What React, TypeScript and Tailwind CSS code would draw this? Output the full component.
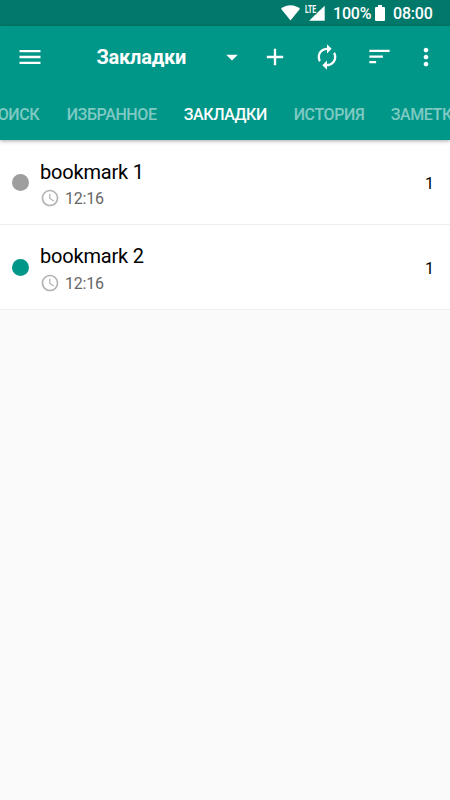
import { useState } from "react";
import {
    MdAccessTime,
    MdAdd,
    MdArrowDropDown,
    MdAutorenew,
    MdMenu,
    MdMoreVert,
    MdSort,
} from "react-icons/md";

const tabs = [
    { label: "ПОИСК", width: "w-[54px]" },
    { label: "ИЗБРАННОЕ", width: "w-[91px]" },
    { label: "ЗАКЛАДКИ", width: "w-[84px]" },
    { label: "ИСТОРИЯ", width: "w-[71px]" },
    { label: "ЗАМЕТКИ", width: "w-[76px]" },
];

const bookmarks = [
    { title: "bookmark 1", time: "12:16", count: 1, dot: "bg-[#9e9e9e]", offset: "pt-[6px]" },
    { title: "bookmark 2", time: "12:16", count: 1, dot: "bg-[#009688]", offset: "pt-[5px]" },
];

const StatusBar = () => (
    <div className="flex h-[26px] shrink-0 items-center bg-[#00796b] pl-[281px] text-base font-medium tracking-[-0.2px] text-white">
        <svg width="19" height="16" viewBox="0 0 19 16" fill="currentColor" className="shrink-0">
            <path d="M9.5 15.5 0 3.8C2.6 1.5 5.8.2 9.5.2S16.4 1.5 19 3.8Z" />
        </svg>
        <div className="relative ml-[4px] h-4 w-[21px] shrink-0">
            <svg width="21" height="16" viewBox="0 0 21 16" fill="currentColor">
                <path d="M20.7.7V15.8H5.2L11.5 9.5H12.500V8.500Z" />
            </svg>
            <span className="absolute left-[1px] top-0 origin-left scale-x-[0.62] text-[11px] font-bold leading-[9px] tracking-normal">LTE</span>
        </div>
        <span className="ml-2 w-[38px] whitespace-nowrap pt-[2px] leading-none">100%</span>
        <svg width="10" height="16" viewBox="0 0 10 16" fill="currentColor" className="ml-[4px] shrink-0">
            <path d="M3 0h4v2h2q1 0 1 1v12q0 1-1 1H1q-1 0-1-1V3q0-1 1-1h2z" />
        </svg>
        <span className="ml-[8px] whitespace-nowrap pt-[2px] leading-none">08:00</span>
    </div>
);

const App = () => {
    const [active, setActive] = useState("ЗАКЛАДКИ");

    return (
        <div className="flex h-[800px] w-[450px] flex-col overflow-hidden bg-[#fafafa] font-[Roboto,'Noto_Sans',sans-serif]">
            <StatusBar />

            <header className="z-10 h-[114px] shrink-0 bg-[#009688] text-white shadow-[0_1px_4px_rgba(0,0,0,0.35)]">
                <div className="flex h-[61px] items-center pl-[16.4px]">
                    <button aria-label="Меню"><MdMenu size={28} /></button>
                    <h1 className="ml-[52px] w-[90px] whitespace-nowrap text-[20px] font-bold leading-6 tracking-[-0.2px]">Закладки</h1>
                    <MdArrowDropDown size={28} className="ml-[31.6px]" />
                    <button aria-label="Добавить" className="ml-[15px]"><MdAdd size={28} /></button>
                    <button aria-label="Обновить" className="ml-[24px]"><MdAutorenew size={28} /></button>
                    <button aria-label="Сортировать" className="ml-[25px]"><MdSort size={27} /></button>
                    <button aria-label="Ещё" className="ml-[19px]"><MdMoreVert size={28} /></button>
                </div>

                <nav className="flex h-[53px] overflow-hidden pt-[2px]">
                    <div className="-ml-[13.3px] flex gap-[26px]">
                        {tabs.map((tab) => (
                            <button
                                key={tab.label}
                                onClick={() => setActive(tab.label)}
                                className={`${tab.width} shrink-0 whitespace-nowrap text-left text-base font-medium tracking-[-0.4px] ${active === tab.label ? "text-white" : "text-white/50"}`}
                            >
                                {tab.label}
                            </button>
                        ))}
                    </div>
                </nav>
            </header>

            <main>
                {bookmarks.map((item) => (
                    <div key={item.title} className="flex h-[85px] items-center border-b border-[#eeeeee] bg-white pl-[11.5px] pr-4">
                        <span className={`size-[17px] rounded-full ${item.dot}`} />
                        <div className={`ml-[11.5px] flex-1 ${item.offset}`}>
                            <div className="text-[20px] leading-[26px] tracking-[-0.2px] text-black">{item.title}</div>
                            <div className="flex h-[27px] items-center text-base tracking-[-0.2px] text-[#666]">
                                <MdAccessTime size={20} className="mr-[5px] text-[#b3b3b3]" />
                                <span className="pt-[2px]">{item.time}</span>
                            </div>
                        </div>
                        <span className="pt-[3px] text-base text-black">{item.count}</span>
                    </div>
                ))}
            </main>
        </div>
    );
};

export default App;
